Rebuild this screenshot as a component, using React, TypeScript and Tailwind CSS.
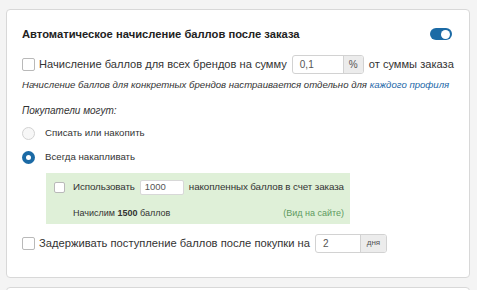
import React, { useState } from 'react';

// ============================================================================
// Настройки начисления баллов
// ============================================================================

function Checkbox({ small = false }: { small?: boolean }) {
  return (
    <span
      className={`inline-block shrink-0 border border-[#b9b9b9] bg-white rounded-[2px] ${
        small ? 'w-[11px] h-[11px]' : 'w-[13px] h-[13px]'
      }`}
    />
  );
}

function Radio({ checked }: { checked: boolean }) {
  if (checked) {
    return (
      <span className="w-[13px] h-[13px] rounded-full bg-[#1b6aa5] flex items-center justify-center shrink-0">
        <span className="w-[5px] h-[5px] rounded-full bg-white" />
      </span>
    );
  }
  return <span className="w-[13px] h-[13px] rounded-full border border-[#d2d2d2] bg-[#f7f7f7] shrink-0" />;
}

function AddonInput({ value, addon, addonWidth, small = false }: { value: string; addon: string; addonWidth: string; small?: boolean }) {
  return (
    <span className="flex h-[19px] w-[72px] border border-[#d2d2d2] rounded-[3px] overflow-hidden bg-white">
      <span className="flex-1 flex items-center pl-[7px] text-[10px] text-[#555]">{value}</span>
      <span
        className={`${addonWidth} flex items-center justify-center bg-[#ececec] border-l border-[#d2d2d2] text-[#555] ${
          small ? 'text-[8px]' : 'text-[10px]'
        }`}
      >
        {addon}
      </span>
    </span>
  );
}

export default function App() {
  const [enabled] = useState(true);

  return (
    <div className="min-h-screen bg-[#f4f4f4] pt-[9px] px-[6px] font-['Liberation_Sans',Arial,sans-serif] text-[#333]">
      <div className="w-[464px] bg-white border border-[#d8d8d8] rounded-[4px] px-[15px] pt-[14px] pb-[24px]">
        {/* Заголовок */}
        <div className="h-[20px] flex items-center justify-between">
          <span className="text-[11.2px] font-bold text-[#222]">Автоматическое начисление баллов после заказа</span>
          <span
            className={`w-[22px] h-[12px] rounded-full flex items-center px-[2px] mr-[2px] ${
              enabled ? 'bg-[#1b6aa5] justify-end' : 'bg-[#ccc]'
            }`}
          >
            <span className="w-[9px] h-[9px] rounded-full bg-white" />
          </span>
        </div>

        {/* Все бренды */}
        <div className="mt-[10px] h-[20px] flex items-center text-[11.1px]">
          <Checkbox />
          <span className="ml-[4px]">Начисление баллов для всех брендов на сумму</span>
          <span className="ml-[5px]">
            <AddonInput value="0,1" addon="%" addonWidth="w-[20px]" />
          </span>
          <span className="ml-[5px]">от суммы заказа</span>
        </div>

        <div className="mt-[4px] leading-[14px] text-[9.6px] italic whitespace-nowrap">
          Начисление баллов для конкретных брендов настраивается отдельно для{' '}
          <span className="text-[#2368a8]">каждого профиля</span>
        </div>

        <div className="mt-[12px] leading-[14px] text-[10px] italic">Покупатели могут:</div>

        {/* Варианты */}
        <div className="mt-[5px] h-[20px] flex items-center text-[9.7px]">
          <Radio checked={false} />
          <span className="ml-[10px]">Списать или накопить</span>
        </div>
        <div className="mt-[4px] h-[20px] flex items-center text-[9.7px]">
          <Radio checked />
          <span className="ml-[10px]">Всегда накапливать</span>
        </div>

        {/* Зелёный блок */}
        <div className="mt-[6px] ml-[24px] w-[304px] bg-[#dff0d8] pl-[8px] pr-[6px] pt-[6px] pb-[4px] text-[9px]">
          <div className="h-[16px] flex items-center text-[9.8px] tracking-[-0.1px]">
            <Checkbox small />
            <span className="ml-[8px]">Использовать</span>
            <span className="ml-[5px] w-[44px] h-[15px] bg-white border border-[#d8d8d8] rounded-[2px] flex items-center pl-[4px] text-[#555] text-[9.5px]">
              1000
            </span>
            <span className="ml-[5px]">накопленных баллов в счет заказа</span>
          </div>
          <div className="mt-[11px] leading-[14px] flex justify-between pl-[19px]">
            <span>
              Начислим <b>1500</b> баллов
            </span>
            <span className="text-[#5e9a5e]">(Вид на сайте)</span>
          </div>
        </div>

        {/* Задержка */}
        <div className="mt-[9px] h-[20px] flex items-center text-[11.2px]">
          <Checkbox />
          <span className="ml-[4px]">Задерживать поступление баллов после покупки на</span>
          <span className="ml-[5px]">
            <AddonInput value="2" addon="дня" addonWidth="w-[26px]" small />
          </span>
        </div>
      </div>

      <div className="mt-[9px] w-[464px] h-[20px] bg-white border border-[#d8d8d8] rounded-[4px]" />
    </div>
  );
}
